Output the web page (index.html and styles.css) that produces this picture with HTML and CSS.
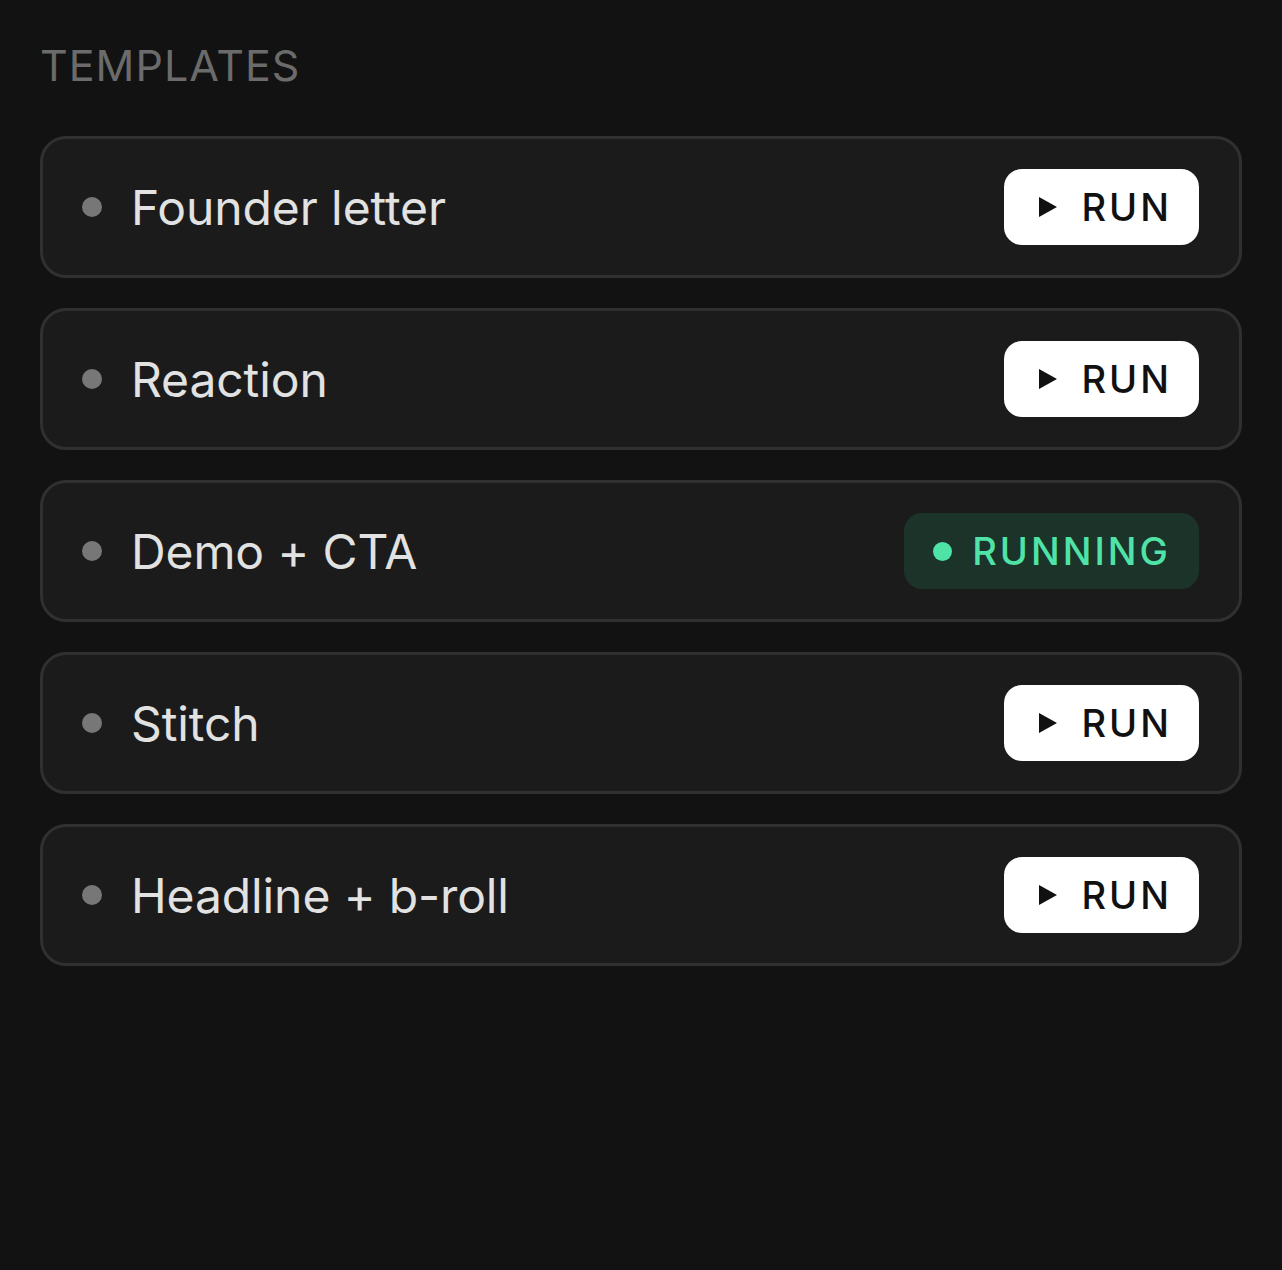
FILE: index.html
```html
<!DOCTYPE html>
<html lang="en">
<head>
<meta charset="utf-8">
<title>Templates</title>
<link rel="stylesheet" href="styles.css">
</head>
<body>
<main class="panel">
  <h2 class="section-title">TEMPLATES</h2>
  <ul class="template-list">
    <li class="template-card">
      <span class="bullet"></span>
      <span class="template-name">Founder letter</span>
      <button class="run-btn"><svg class="play" viewBox="0 0 18 20" width="18" height="20"><path d="M0 0 L18 10 L0 20 Z"/></svg><span class="run-label">RUN</span></button>
    </li>
    <li class="template-card">
      <span class="bullet"></span>
      <span class="template-name">Reaction</span>
      <button class="run-btn"><svg class="play" viewBox="0 0 18 20" width="18" height="20"><path d="M0 0 L18 10 L0 20 Z"/></svg><span class="run-label">RUN</span></button>
    </li>
    <li class="template-card">
      <span class="bullet"></span>
      <span class="template-name">Demo + CTA</span>
      <span class="running-badge"><span class="running-dot"></span><span class="running-label">RUNNING</span></span>
    </li>
    <li class="template-card">
      <span class="bullet"></span>
      <span class="template-name">Stitch</span>
      <button class="run-btn"><svg class="play" viewBox="0 0 18 20" width="18" height="20"><path d="M0 0 L18 10 L0 20 Z"/></svg><span class="run-label">RUN</span></button>
    </li>
    <li class="template-card">
      <span class="bullet"></span>
      <span class="template-name">Headline + b-roll</span>
      <button class="run-btn"><svg class="play" viewBox="0 0 18 20" width="18" height="20"><path d="M0 0 L18 10 L0 20 Z"/></svg><span class="run-label">RUN</span></button>
    </li>
  </ul>
</main>
</body>
</html>
```

FILE: styles.css
```css
* { box-sizing: border-box; }
html, body {
  margin: 0;
  background: #121212;
}
body {
  font-family: Inter, "Noto Sans", sans-serif;
  min-height: 1270px;
}
.panel {
  padding: 39px 40px 40px;
}
.section-title {
  margin: 0 0 44px;
  font-size: 43px;
  line-height: 53px;
  font-weight: 400;
  letter-spacing: 1px;
  color: #6b6b6b;
}
.template-list {
  list-style: none;
  margin: 0;
  padding: 0;
  display: flex;
  flex-direction: column;
  gap: 30px;
}
.template-card {
  display: flex;
  align-items: center;
  height: 142px;
  padding: 0 40px 0 39px;
  background: #1b1b1b;
  border: 3px solid #303030;
  border-radius: 26px;
}
.bullet {
  width: 20px;
  height: 20px;
  border-radius: 50%;
  background: #777777;
  flex: none;
}
.template-name {
  margin-left: 29px;
  flex: 1;
  font-size: 48px;
  letter-spacing: -0.1px;
  color: #e2e2e2;
  font-weight: 400;
}
.run-btn {
  display: flex;
  align-items: center;
  gap: 25px;
  height: 76px;
  padding: 0 27px 0 35px;
  border: none;
  border-radius: 18px;
  background: #ffffff;
  color: #111111;
  font-family: inherit;
  cursor: pointer;
}
.play { fill: #111111; display: block; }
.run-label {
  font-size: 38px;
  font-weight: 500;
  letter-spacing: 3px;
}
.running-badge {
  display: flex;
  align-items: center;
  gap: 20px;
  height: 76px;
  padding: 0 28px 0 29px;
  border-radius: 18px;
  background: #1b3329;
}
.running-dot {
  width: 19px;
  height: 19px;
  border-radius: 50%;
  background: #4fe3a8;
}
.running-label {
  font-size: 38px;
  font-weight: 500;
  letter-spacing: 3px;
  color: #4fe3a8;
}
```
